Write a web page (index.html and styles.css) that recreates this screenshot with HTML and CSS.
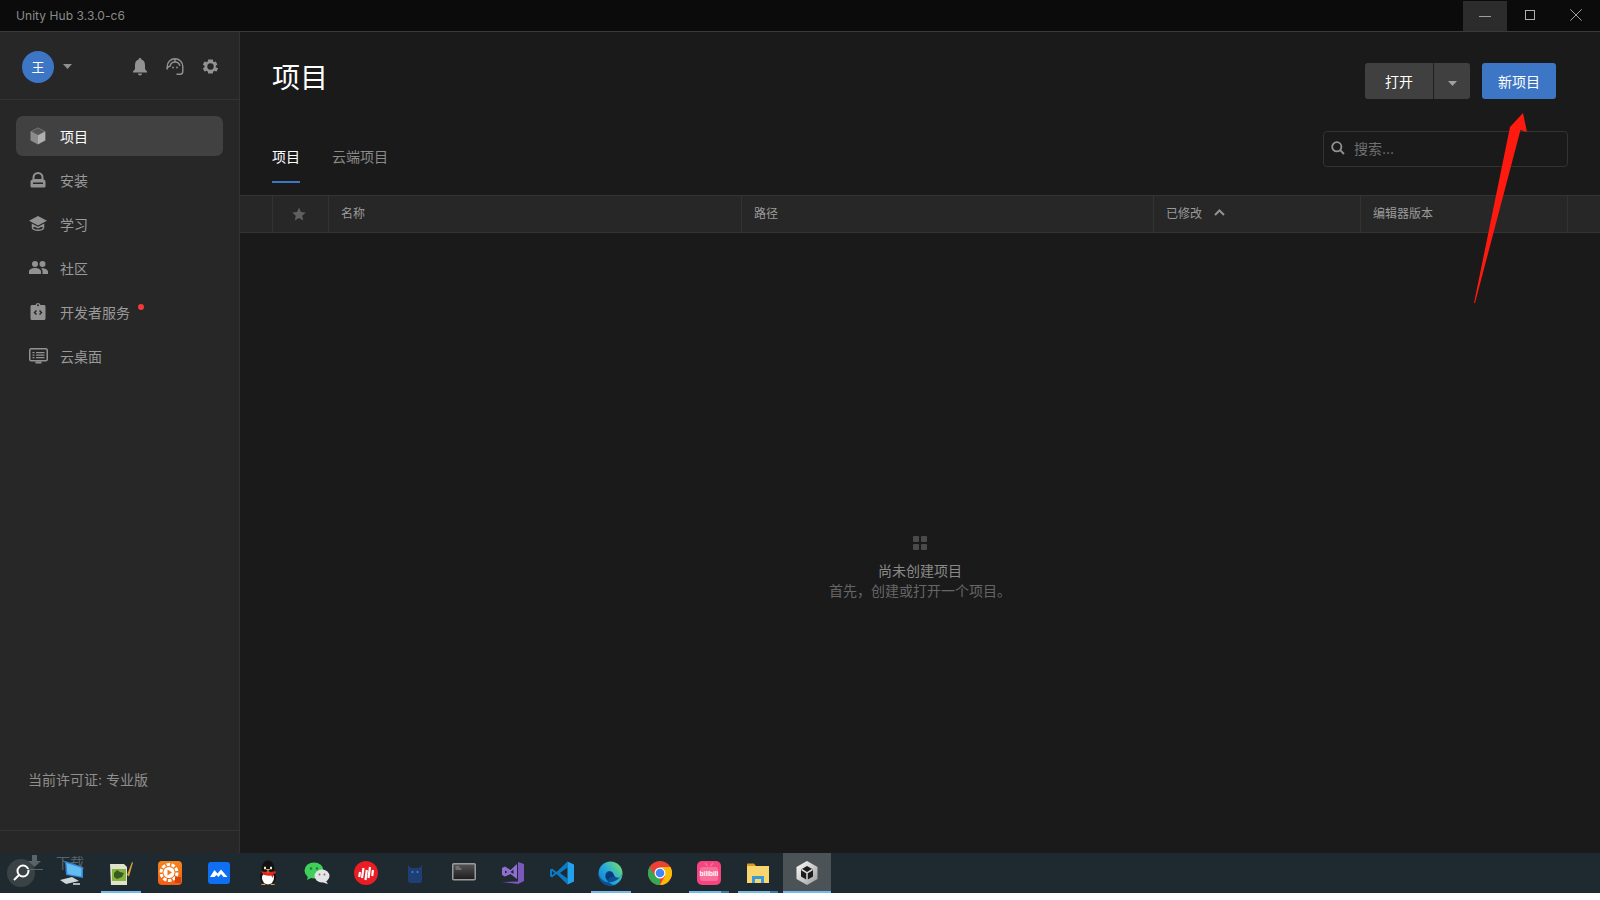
FILE: index.html
```html
<!DOCTYPE html>
<html lang="zh">
<head>
<meta charset="utf-8">
<title>Unity Hub</title>
<link rel="stylesheet" href="styles.css">
</head>
<body>
<div class="app">
  <header class="titlebar">
    <span class="app-title">Unity Hub 3.3.0-c6</span>
    <div class="win-controls">
      <div class="win-btn win-hover"><svg width="12" height="12" viewBox="0 0 12 12"><path d="M0 6.500h12" stroke="#a0a0a0" fill="none"/></svg></div>
      <div class="win-btn"><svg width="12" height="12" viewBox="0 0 12 12"><rect x="1.500" y="1.500" width="9" height="9" stroke="#b0b0b0" fill="none"/></svg></div>
      <div class="win-btn"><svg width="12" height="12" viewBox="0 0 12 12"><path d="M.3.300l11.400 11.400M11.700.300L.3 11.700" stroke="#a0a0a0" fill="none"/></svg></div>
    </div>
  </header>
  <div class="workspace">
    <aside class="sidebar">
      <div class="account">
        <div class="avatar">王</div>
        <svg class="caret" width="10" height="5" viewBox="0 0 10 5"><path d="M0 0h9L4.500 5z" fill="#8f8f8f"/></svg>
        <div class="account-icons">
          <svg width="16" height="18" viewBox="0 0 16 18"><path d="M8 0a1.300 1.300 0 0 1 1.300 1.500C12 2.200 13 4.500 13 7v4l2 2.500v1H1v-1L3 11V7c0-2.500 1-4.800 3.700-5.500A1.300 1.300 0 0 1 8 0zM6 15.500h4a2 2 0 0 1-4 0z" fill="#929292"/></svg>
          <svg width="18" height="17" viewBox="0 0 18 17" fill="none" stroke="#929292" stroke-width="1.400"><path d="M1.200 11.500V8.500a7.800 7.800 0 0 1 15.600 0v5c0 1.800-1 2.700-2.500 2.700h-3.800"/><path d="M1.200 11c0-1.500 2-3 3-3 .5-3 2-4 4.800-4s4.300 1 4.800 4"/><circle cx="7" cy="9.500" r=".9" fill="#929292" stroke="none"/><circle cx="11" cy="9.500" r=".9" fill="#929292" stroke="none"/><path d="M9 1v3"/></svg>
          <svg width="17" height="17" viewBox="0 0 24 24"><path fill="#929292" fill-rule="evenodd" d="M19.400 13c.1-.3.100-.7.100-1s0-.7-.1-1l2.100-1.600c.2-.2.200-.4.100-.6l-2-3.500c-.1-.2-.4-.3-.6-.2L17.500 6.100c-.5-.4-1.100-.7-1.700-1L15.400 2.400c0-.2-.2-.4-.5-.4h-5.800c-.2 0-.5.200-.5.400l-.4 2.700c-.6.200-1.200.6-1.700 1L4 5.100c-.2-.1-.5 0-.6.200l-2 3.500c-.1.200-.1.500.1.600L3.600 11c0 .3-.1.700-.1 1s0 .7.100 1l-2.100 1.600c-.2.200-.2.400-.1.600l2 3.500c.1.200.4.300.6.200l2.500-1c.5.400 1.100.7 1.700 1l.4 2.700c0 .2.300.4.500.4h5.800c.3 0 .5-.2.500-.4l.4-2.700c.6-.2 1.200-.6 1.700-1l2.500 1c.2.100.5 0 .6-.2l2-3.500c.1-.2.100-.5-.1-.6zM12 16.500a4.500 4.500 0 1 1 0-9 4.500 4.500 0 0 1 0 9z"/></svg>
        </div>
      </div>
      <nav class="nav">
        <a class="nav-item active"><span class="nav-icon"><svg width="16" height="18" viewBox="0 0 16 18"><path d="M8 .5l7.500 4v9L8 17.500l-7.500-4v-9z" fill="#8c8c8c"/><path d="M8 8.500L15 4.800v8.500L8 17z" fill="#b0b0b0"/><path d="M8 1l6.500 3.500L8 8 1.500 4.500z" fill="#555"/></svg></span>项目</a>
        <a class="nav-item"><span class="nav-icon"><svg width="16" height="16" viewBox="0 0 16 16"><path d="M2.500 7.500V5.500a5.500 5.500 0 0 1 11 0v2c1 .2 2 1 2 2v4.500c0 1-.6 1.500-1.500 1.500H2C1.100 15.500.5 15 .5 14V9.500c0-1 1-1.800 2-2zm2-.5h7V5.500a3.500 3.500 0 0 0-7 0zM3 10.500V12h10v-1.500z" fill="#929292" fill-rule="evenodd"/></svg></span>安装</a>
        <a class="nav-item"><span class="nav-icon"><svg width="18" height="16" viewBox="0 0 18 16"><path d="M9 0l9 4.700-9 4.800L0 4.700z" fill="#929292"/><path d="M3.500 8.800v3.200C5 15 13 15 14.500 12V8.800L9 11.700z" fill="none" stroke="#929292" stroke-width="1.500"/></svg></span>学习</a>
        <a class="nav-item"><span class="nav-icon"><svg width="19" height="13" viewBox="0 0 19 13"><circle cx="6" cy="3" r="3" fill="#929292"/><circle cx="13.500" cy="3" r="3" fill="#929292"/><path d="M0 13v-2.500C0 8.500 3 7 6 7s6 1.500 6 3.500V13zM13.500 13v-2.500c0-1.300-.6-2.400-1.600-3.200C15 6.700 19 8.300 19 10.500V13z" fill="#929292"/></svg></span>社区</a>
        <a class="nav-item"><span class="nav-icon"><svg width="16" height="17" viewBox="0 0 16 17"><path fill="#929292" fill-rule="evenodd" d="M2 2h3.500a2.600 2.600 0 0 1 5 0H14c.8 0 1.500.7 1.500 1.500v12c0 .8-.7 1.500-1.500 1.500H2c-.8 0-1.500-.7-1.500-1.500v-12C.5 2.700 1.200 2 2 2zm6-.8a1 1 0 1 0 0 2 1 1 0 0 0 0-2zM6 7L3.500 9.500 6 12l1-1-1.500-1.500L7 8zm4 0L9 8l1.500 1.500L9 11l1 1 2.500-2.500z"/></svg></span>开发者服务<i class="dot"></i></a>
        <a class="nav-item"><span class="nav-icon"><svg width="19" height="16" viewBox="0 0 19 16"><rect x=".75" y=".75" width="17.500" height="12" rx="1.500" fill="none" stroke="#929292" stroke-width="1.500"/><path d="M3.500 4h2v1.300h-2zM7 4h8.500v1.300H7zM3.500 6.500h2v1.300h-2zM7 6.500h8.500v1.300H7zM3.500 9h2v1.300h-2zM7 9h8.500v1.300H7zM6.500 13.500h6V15.500h-6z" fill="#929292"/></svg></span>云桌面</a>
      </nav>
      <div class="license">当前许可证: 专业版</div>
      <div class="side-foot"></div>
    </aside>
    <main class="content">
      <div class="head-row">
        <h1 class="page-title">项目</h1>
        <div class="actions">
          <div class="split">
            <button class="btn-open">打开</button>
            <button class="btn-caret"><svg width="10" height="5" viewBox="0 0 10 5"><path d="M0 0h9L4.500 5z" fill="#a0a0a0"/></svg></button>
          </div>
          <button class="btn-new">新项目</button>
        </div>
      </div>
      <div class="tab-row">
        <div class="tabs">
          <span class="tab current">项目</span>
          <span class="tab">云端项目</span>
        </div>
        <div class="search">
          <svg width="14" height="14" viewBox="0 0 14 14" fill="none" stroke="#929292" stroke-width="1.800"><circle cx="5.800" cy="5.800" r="4.600"/><path d="M9.200 9.200L13 13"/></svg>
          <span>搜索...</span>
        </div>
      </div>
      <div class="table-head">
        <div class="col col-blank"></div>
        <div class="col col-star"><svg width="14" height="14" viewBox="0 0 24 24"><path d="M12 1l3.400 7.500 8.200.9-6.100 5.500 1.700 8.100L12 18.900l-7.200 4.100 1.700-8.100L.4 9.400l8.200-.9z" fill="#5f5f5f"/></svg></div>
        <div class="col col-wide">名称</div>
        <div class="col col-path">路径</div>
        <div class="col col-mid">已修改<svg class="sort" width="11" height="7" viewBox="0 0 11 7"><path d="M1 6l4.500-4.500L10 6" fill="none" stroke="#929292" stroke-width="2"/></svg></div>
        <div class="col col-mid">编辑器版本</div>
        <div class="col col-end"></div>
      </div>
      <div class="empty">
        <div class="grid-icon"><i></i><i></i><i></i><i></i></div>
        <div class="empty-title">尚未创建项目</div>
        <div class="empty-sub">首先，创建或打开一个项目。</div>
      </div>
    </main>
  </div>
  <footer class="taskbar">
    <div class="tb-search"><svg width="22" height="22" viewBox="0 0 22 22" fill="none" stroke="#fff" stroke-width="2"><circle cx="13" cy="9" r="5.500"/><path d="M9 13l-5 5"/></svg></div>
    <svg class="tb-dl" width="20" height="20" viewBox="0 0 20 20"><path d="M7 1h5v6h4l-6.500 6L3 7h4zM2 15h16v1H2z" fill="#5a6468"/></svg>
    <span class="tb-label">下载</span>
    <div class="tb-apps">
      <div class="tb-app"><svg width="26" height="24" viewBox="0 0 26 24"><path d="M6 0l18 6v11L7 14z" fill="#2f86d8"/><path d="M7.500 2L22.500 7v8.500L8.500 13z" fill="#63bdf0"/><path d="M1 19l12-3 7 4-13 3z" fill="#cfd6da"/><path d="M14 22h7v2h-7z" fill="#aab4b8"/></svg></div>
      <div class="tb-app on"><svg width="26" height="26" viewBox="0 0 26 26"><path d="M2 4h14l3 3v18H3z" fill="#dfe2cc"/><rect x="4" y="9" width="14" height="12" fill="#86b440"/><path d="M6 13l3-3 3 2 4 1-2 4-5 2-3-2z" fill="#3b5a20"/><path d="M19 15L24 2l1 .5-4 14z" fill="#d9a23b"/></svg></div>
      <div class="tb-app"><svg width="24" height="24" viewBox="0 0 24 24"><defs><linearGradient id="orangeG" x1="0" y1="0" x2="0" y2="1"><stop offset="0" stop-color="#f5851e"/><stop offset="1" stop-color="#f25f14"/></linearGradient></defs><rect width="24" height="24" rx="4" fill="url(#orangeG)"/><circle cx="11" cy="11.500" r="8" fill="none" stroke="#fff" stroke-width="3" stroke-dasharray="3.500 1.500"/><circle cx="11" cy="11.500" r="5.500" fill="#fff"/><path d="M9.500 8.500l4.500 3-4.500 3z" fill="#f4761b"/><path d="M17 16h6v6h-6z" fill="#d64510"/></svg></div>
      <div class="tb-app"><svg width="22" height="22" viewBox="0 0 22 22"><rect width="22" height="22" rx="3" fill="#0f6ff2"/><path d="M2 15l4.500-7 3 3.500 3.500-4 6.500 7.500h-4l-2.500-3-2.500 3-2-2-2 2z" fill="#fff"/></svg></div>
      <div class="tb-app"><svg width="22" height="26" viewBox="0 0 22 26"><ellipse cx="11" cy="9" rx="6.500" ry="8.500" fill="#111"/><ellipse cx="11" cy="17" rx="8" ry="8" fill="#111"/><ellipse cx="11" cy="18" rx="6" ry="6.500" fill="#fff"/><path d="M4 11c4 1.500 10 1.500 14 0l1 2-3 1.500v3.500l-2-2.500c-3 .5-6 0-8-1z" fill="#e2231a"/><path d="M8 6.500a1 1.500 0 1 0 .01 0zM14 6.500a1 1.500 0 1 0 .01 0z" fill="#fff"/><path d="M8.500 9h5l-2.500 2z" fill="#f3a81c"/><path d="M4 24.500l4-1 .5 1.500H4zM18 24.500l-4-1-.5 1.500H18z" fill="#f3a81c"/></svg></div>
      <div class="tb-app"><svg width="26" height="24" viewBox="0 0 26 24"><ellipse cx="10" cy="9.500" rx="9.500" ry="8" fill="#3fcf5a"/><path d="M4 15l-1 4 5-2.500z" fill="#3fcf5a"/><ellipse cx="18" cy="15" rx="7.500" ry="6.500" fill="#e4e4e4"/><path d="M22 20l2 3-5-1.500z" fill="#e4e4e4"/><circle cx="7" cy="7.500" r="1.200" fill="#1f7a33"/><circle cx="13" cy="7.500" r="1.200" fill="#1f7a33"/><circle cx="15.500" cy="13.500" r="1" fill="#777"/><circle cx="20.500" cy="13.500" r="1" fill="#777"/></svg></div>
      <div class="tb-app"><svg width="24" height="24" viewBox="0 0 24 24"><circle cx="12" cy="12" r="12" fill="#ea1c24"/><path d="M6 11l-.8 5M9.500 7l-1.500 10M12.800 9l-1.300 10M16 6l-1.500 11M19 9l-.8 6" stroke="#fff" stroke-width="2.200" fill="none"/></svg></div>
      <div class="tb-app"><svg width="20" height="24" viewBox="0 0 20 24"><path d="M3 4l3 3h8l3-3v15c0 2-1 3-3 3H6c-2 0-3-1-3-3z" fill="#1f3f74"/><circle cx="7.500" cy="11" r="1" fill="#4a86d8"/><circle cx="12.500" cy="11" r="1" fill="#4a86d8"/></svg></div>
      <div class="tb-app"><svg width="24" height="20" viewBox="0 0 24 20"><defs><linearGradient id="cmdG" x1="0" y1="0" x2="0" y2="1"><stop offset="0" stop-color="#555"/><stop offset="1" stop-color="#1c1c1c"/></linearGradient></defs><rect x=".75" y=".75" width="22.500" height="16" rx="1" fill="url(#cmdG)" stroke="#9a9a9a" stroke-width="1.500"/><path d="M3.500 3.500h4v1h-4zM3.500 5.500h6v1h-6z" fill="#9a9a9a"/></svg></div>
      <div class="tb-app"><svg width="24" height="24" viewBox="0 0 24 24"><path d="M17 1l6 2v17l-6 3-16-2 16-.5z" fill="#7a58bd"/><path d="M1 7l3-1.500L9.500 9 16 3v15l-6.500-5L4 15.500 1 14zm3 2.500v3l2.500-1.500zm8.500-1L9.500 11l3 2z" fill="#8f6fd1"/></svg></div>
      <div class="tb-app"><svg width="24" height="24" viewBox="0 0 24 24"><path d="M17.500.5L6.500 11 2 7.500 0 8.800v6.400l2 1.300L6.500 13l11 10.500v-6L10 12l7.500-5.500z" fill="#0a7ac4"/><path d="M17.500.5L24 3.600v16.800l-6.500 3.100z" fill="#22a2ee"/><path d="M2 9.800L4.500 12 2 14.200z" fill="#1f2a30"/></svg></div>
      <div class="tb-app on"><svg width="25" height="25" viewBox="0 0 25 25"><defs><linearGradient id="edgeA" x1="0" y1="1" x2="1" y2=".2"><stop offset="0" stop-color="#1274c4"/><stop offset=".5" stop-color="#23a8e0"/><stop offset="1" stop-color="#6fdc70"/></linearGradient></defs><circle cx="12.500" cy="12.500" r="12" fill="url(#edgeA)"/><path d="M24.400 13c-.7 3.800-4.500 4.300-7 3-2-1.200-1.500-3.500-3-4.800-3-2.500-7.500-.5-7 4 .4 4 4 8 9.500 9C8 26.500 1 22 .5 13c2 7 8 9 13 8 4.500-.8 8-3 10.900-8z" fill="#0b4f94"/><path d="M7.500 15.500c0-3.500 3.500-5.500 6.500-4 1.500.8 1.500 3 3 4.500-3.500-1-6.500 0-6.500 3.500-1.500-.8-3-2-3-4z" fill="#0a3a78"/></svg></div>
      <div class="tb-app"><svg width="24" height="24" viewBox="0 0 24 24"><circle cx="12" cy="12" r="12" fill="#ea4335"/><path d="M12 24A12 12 0 0 1 1.600 6L7 15l5 3z" fill="#34a853"/><path d="M12 6h10.400A12 12 0 0 1 12 24l5-9V9z" fill="#fbbc05"/><circle cx="12" cy="12" r="5.500" fill="#fff"/><circle cx="12" cy="12" r="4.300" fill="#4285f4"/></svg></div>
      <div class="tb-app on part"><svg width="24" height="24" viewBox="0 0 24 24"><rect width="24" height="24" rx="5" fill="#f7447f"/><rect x="3" y="6" width="18" height="14" rx="2.500" fill="#f96f9b"/><path d="M8 2l2.500 3M16 2l-2.500 3" stroke="#f96f9b" stroke-width="1.500"/><text class="bili" x="12" y="15">bilibili</text></svg></div>
      <div class="tb-app on part"><svg width="22" height="20" viewBox="0 0 22 20"><path d="M0 1.500C0 .8.500.5 1 .5h6l2 2.500h12l.500 1v3H0z" fill="#d99a1e"/><rect y="3" width="22" height="17" fill="#f8d66d"/><path d="M5 20v-7h12v7h-3v-4H8v4z" fill="#3a9ad9"/></svg></div>
      <div class="tb-app on current"><svg width="22" height="24" viewBox="0 0 22 24"><defs><linearGradient id="unityG" x1="0" y1="0" x2="1" y2="1"><stop offset="0" stop-color="#fff"/><stop offset="1" stop-color="#9a9a9a"/></linearGradient></defs><path d="M11 0l10.500 6v12L11 24 .5 18V6z" fill="url(#unityG)"/><path d="M11 5l6 3.500v7L11 19l-6-3.500v-7z" fill="#1c1c1c"/><path d="M5.500 8.500L11 11.800l5.500-3.300M11 11.800V19" fill="none" stroke="#d8d8d8" stroke-width="1.500"/></svg></div>
    </div>
  </footer>
  <div class="desktop-strip"></div>
  <svg class="arrow" width="70" height="200" viewBox="0 0 70 200"><path d="M49 0L53 19 46.500 17 1 190 0 190 36 14z" fill="#ff1a0f"/></svg>
</div>
</body>
</html>
```
FILE: styles.css
```css
* { box-sizing: border-box; }
html, body { margin: 0; height: 100%; background: #fff; overflow: hidden; }
body { font-family: "Inter", "Noto Sans CJK SC", sans-serif; font-size: 14px; color: #a0a0a0; }
.app { position: relative; width: 1600px; height: 900px; display: flex; flex-direction: column; }

.titlebar { height: 32px; flex: none; background: #0b0b0b; border-bottom: 1px solid #3a3a3a; display: flex; align-items: center; justify-content: space-between; padding-left: 16px; }
.app-title { font-size: 12px; color: #8a8a8a; letter-spacing: .06px; }
.win-controls { display: flex; height: 31px; padding-right: 1px; }
.win-btn { width: 46px; height: 30px; display: flex; align-items: center; justify-content: center; }
.win-hover { background: #2c2c2c; margin-top: 1px; width: 44px; }

.workspace { height: 821px; flex: none; display: flex; }

.sidebar { width: 240px; flex: none; background: #272727; border-right: 1px solid #333; display: flex; flex-direction: column; }
.account { height: 68px; flex: none; border-bottom: 1px solid #333; display: flex; align-items: center; padding: 2px 20px 0 22px; }
.avatar { width: 32px; height: 32px; border-radius: 50%; background: #3d76c4; color: #fff; font-size: 13px; display: flex; align-items: center; justify-content: center; }
.caret { margin-left: 9px; }
.account-icons { margin-left: auto; display: flex; align-items: center; gap: 18px; }
.nav { flex: 1; padding: 16px 16px 0; display: flex; flex-direction: column; gap: 4px; }
.nav-item { height: 40px; border-radius: 7px; display: flex; align-items: center; color: #9a9a9a; font-size: 14px; padding: 0 0 1px 12px; }
.nav-item.active { background: #414141; color: #fff; }
.nav-icon { width: 20px; display: flex; justify-content: center; margin: 0 12px 0 0; }
.dot { width: 6px; height: 6px; border-radius: 50%; background: #f13a3a; margin: -10px 0 0 8px; }
.license { height: 38px; margin-top: -1px; margin-bottom: 23px; font-size: 14px; color: #8f8f8f; padding-left: 28px; }
.side-foot { height: 23px; flex: none; border-top: 1px solid #333; }

.content { flex: 1; background: #1a1a1a; display: flex; flex-direction: column; }
.head-row { height: 99px; flex: none; display: flex; justify-content: space-between; padding: 31px 44px 0 32px; }
.page-title { margin: 1px 0 0; font-size: 28px; font-weight: 400; color: #fff; line-height: 28px; }
.actions { display: flex; gap: 12px; height: 36px; }
.split { display: flex; }
button { font-family: inherit; font-size: 14px; border: 0; color: #fff; padding: 0 0 1px; }
.btn-open { width: 68px; background: #404040; border-radius: 3px 0 0 3px; }
.btn-caret { width: 37px; background: #404040; border-left: 1px solid #1f1f1f; border-radius: 0 3px 3px 0; padding: 0 0 1px 1px; }
.btn-new { width: 74px; background: #3d76c4; border-radius: 3px; }
.tab-row { height: 64px; flex: none; display: flex; justify-content: space-between; padding: 0 32px; }
.tabs { display: flex; gap: 32px; }
.tab { height: 52px; padding-top: 15px; color: #8a8a8a; }
.tab.current { color: #fff; border-bottom: 2px solid #3d76c4; }
.search { width: 245px; height: 36px; border: 1px solid #333; border-radius: 4px; display: flex; align-items: center; gap: 9px; padding: 0 0 2px 7px; color: #6f6f6f; font-size: 14px; }
.table-head { height: 38px; flex: none; background: #272727; border-top: 1px solid #333; border-bottom: 1px solid #333; display: flex; }
.col { display: flex; align-items: center; border-right: 1px solid #333; padding: 0 0 3px 12px; font-size: 12px; color: #9a9a9a; }
.col-blank { width: 33px; padding: 0; }
.col-star { width: 56px; padding: 0 3px 1px 0; justify-content: center; }
.col-wide { width: 413px; }
.col-path { width: 412px; }
.col-mid { width: 207px; }
.col-end { flex: 1; border-right: 0; }
.sort { margin-left: 12px; }
.empty { flex: 1; display: flex; flex-direction: column; align-items: center; padding-top: 303px; }
.grid-icon { display: grid; grid-template-columns: 6px 6px; grid-auto-rows: 6px; gap: 2px; margin-bottom: 11px; }
.grid-icon i { background: #4a4a4a; border-radius: 1px; }
.empty-title { font-size: 14px; line-height: 20px; color: #8a8a8a; }
.empty-sub { font-size: 14px; line-height: 20px; color: #666; }

.taskbar { position: relative; height: 40px; flex: none; background: #1f2a30; }
.tb-search { position: absolute; left: 7px; top: 6px; width: 28px; height: 28px; border-radius: 50%; background: #3b4246; display: flex; align-items: center; justify-content: center; }
.tb-dl { position: absolute; left: 25px; top: 1px; }
.tb-label { position: absolute; left: 56px; top: 0; color: #5a6468; font-size: 14px; line-height: 20px; }
.tb-apps { display: flex; padding-left: 47px; height: 40px; }
.tb-app { position: relative; width: 49px; height: 40px; display: flex; align-items: center; justify-content: center; }
.tb-app.on::after { content: ""; position: absolute; left: 5px; bottom: 0; width: 40px; height: 2px; background: #76b9ed; }
.tb-app.part::before { content: ""; position: absolute; left: 37px; bottom: 0; width: 8px; height: 2px; background: #3f7ba8; z-index: 1; }
.tb-app.current { background: #4b5356; width: 48px; margin-left: 1px; }
.tb-app.current::after { left: 0; width: 48px; }
.bili { font-family: "Liberation Sans", sans-serif; font-size: 6.500px; font-weight: 700; fill: #fff; text-anchor: middle; }
.desktop-strip { flex: 1; background: #fff; }
.arrow { position: absolute; left: 1474px; top: 113px; }
```
